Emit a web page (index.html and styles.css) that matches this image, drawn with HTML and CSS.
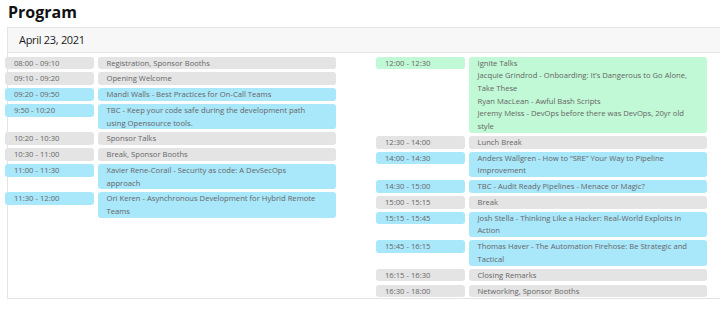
FILE: index.html
```html
<!DOCTYPE html>
<html lang="en">
<head>
<meta charset="utf-8">
<title>Program</title>
<link rel="stylesheet" href="styles.css">
</head>
<body>
<h1 class="title">Program</h1>
<section class="card">
  <header class="card-header">April 23, 2021</header>
  <div class="card-body">
    <div class="col">
      <div class="row"><div class="time gray">08:00 - 09:10</div><div class="desc gray">Registration, Sponsor Booths</div></div>
      <div class="row"><div class="time gray">09:10 - 09:20</div><div class="desc gray">Opening Welcome</div></div>
      <div class="row"><div class="time blue">09:20 - 09:50</div><div class="desc blue">Mandi Walls - Best Practices for On-Call Teams</div></div>
      <div class="row"><div class="time blue">9:50 - 10:20</div><div class="desc blue">TBC - Keep your code safe during the development path using Opensource tools.</div></div>
      <div class="row"><div class="time gray">10:20 - 10:30</div><div class="desc gray">Sponsor Talks</div></div>
      <div class="row"><div class="time gray">10:30 - 11:00</div><div class="desc gray">Break, Sponsor Booths</div></div>
      <div class="row"><div class="time blue">11:00 - 11:30</div><div class="desc blue">Xavier Rene-Corail - Security as code: A DevSecOps approach</div></div>
      <div class="row"><div class="time blue">11:30 - 12:00</div><div class="desc blue">Ori Keren - Asynchronous Development for Hybrid Remote Teams</div></div>
    </div>
    <div class="col">
      <div class="row"><div class="time green">12:00 - 12:30</div><div class="desc green">Ignite Talks<br>Jacquie Grindrod - Onboarding: It’s Dangerous to Go Alone, Take These<br>Ryan MacLean - Awful Bash Scripts<br>Jeremy Meiss - DevOps before there was DevOps, 20yr old style</div></div>
      <div class="row"><div class="time gray">12:30 - 14:00</div><div class="desc gray">Lunch Break</div></div>
      <div class="row"><div class="time blue">14:00 - 14:30</div><div class="desc blue">Anders Wallgren - How to “SRE” Your Way to Pipeline Improvement</div></div>
      <div class="row"><div class="time blue">14:30 - 15:00</div><div class="desc blue">TBC - Audit Ready Pipelines - Menace or Magic?</div></div>
      <div class="row"><div class="time gray">15:00 - 15:15</div><div class="desc gray">Break</div></div>
      <div class="row"><div class="time blue">15:15 - 15:45</div><div class="desc blue">Josh Stella - Thinking Like a Hacker: Real-World Exploits in Action</div></div>
      <div class="row"><div class="time blue">15:45 - 16:15</div><div class="desc blue">Thomas Haver - The Automation Firehose: Be Strategic and Tactical</div></div>
      <div class="row"><div class="time gray">16:15 - 16:30</div><div class="desc gray">Closing Remarks</div></div>
      <div class="row"><div class="time gray">16:30 - 18:00</div><div class="desc gray">Networking, Sponsor Booths</div></div>
    </div>
  </div>
</section>
</body>
</html>
```
FILE: styles.css
```css
html, body {
  margin: 0;
  padding: 0;
  background: #ffffff;
  overflow: hidden;
}
body {
  font-family: "Open Sans", "Noto Sans", sans-serif;
  color: #222;
}
.title {
  margin: 1px 0 0 8px;
  font-size: 16px;
  line-height: 22px;
  font-weight: 700;
  color: #111;
}
.card {
  margin: 4px -20px 0 7px;
  border: 1px solid #e4e4e4;
  height: 272px;
  box-sizing: border-box;
}
.card-header {
  height: 25px;
  box-sizing: border-box;
  background: #f7f7f7;
  border-bottom: 1px solid #e4e4e4;
  padding: 4px 0 0 11px;
  font-size: 11px;
  letter-spacing: -0.3px;
  line-height: 16px;
  color: #1a1a1a;
}
.card-body {
  display: grid;
  grid-template-columns: 331px 331px;
  column-gap: 40px;
  margin-left: -3px;
  padding-top: 3.5px;
  align-items: start;
}
.col {
  display: flex;
  flex-direction: column;
  gap: 3.1px;
}
.row {
  display: grid;
  grid-template-columns: 89px 238.5px;
  column-gap: 3.5px;
  align-items: start;
  font-size: 7.65px;
  line-height: 12.7px;
  color: #666666;
}
.time, .desc {
  border-radius: 3px;
  padding: 0 9px;
}
.desc {
  padding-right: 14px;
}
.gray { background: #e4e4e4; }
.blue { background: #a9e7fb; }
.green { background: #c1f8d5; }
```
